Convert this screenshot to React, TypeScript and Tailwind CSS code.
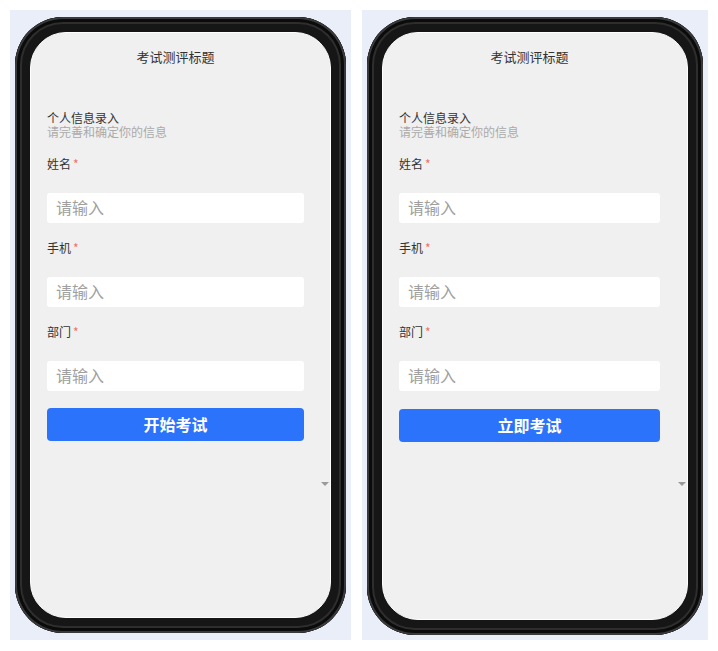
import React from "react";

const font = { fontFamily: '"Noto Sans CJK SC", "Noto Sans", sans-serif' };

function Field({ label }: { label: string }) {
  return (
    <div className="flex flex-col">
      <div className="h-4 text-[12px] leading-4 text-[#333]">
        {label}
        <span className="ml-[2px] text-[#f56c6c]">*</span>
      </div>
      <div className="mt-[21px] h-[30px] rounded-[3px] bg-white pl-[9px] text-[16px] leading-[29px] text-[#a0a0a0]">
        请输入
      </div>
    </div>
  );
}

function Phone({
  button,
  outer,
  pr,
  btnGap,
}: {
  button: string;
  outer: string;
  pr: string;
  btnGap: string;
}) {
  return (
    <div className={`flex flex-col bg-[#e9eef8] ${outer}`}>
      <div className="flex flex-1 flex-col rounded-[48px] bg-[#161616] p-[15px] shadow-[inset_0_0_0_2px_#3a3a3a,inset_0_0_0_5px_#0b0b0b,inset_0_0_0_7px_#2e2e2e]">
        <div
          className={`relative flex flex-1 flex-col rounded-[36px] border border-white bg-[#f0f0f0] pl-[16px] ${pr}`}
        >
          <div className="mt-[14px] h-5 text-center text-[13px] leading-5 text-[#333]">
            考试测评标题
          </div>
          <div className="mt-[44px] text-[12px] leading-[14px] text-[#333]">
            个人信息录入
          </div>
          <div className="text-[12px] leading-[14px] text-[#aaa]">请完善和确定你的信息</div>
          <div className="mt-[17px] flex flex-col gap-[17px]">
            <Field label="姓名" />
            <Field label="手机" />
            <Field label="部门" />
          </div>
          <div
            className={`${btnGap} h-[33px] rounded-[4px] bg-[#2b73fb] text-center text-[16px] font-bold leading-[33px] text-white`}
          >
            {button}
          </div>
          <div className="absolute right-[1px] top-[449px] h-0 w-0 border-x-[4px] border-t-[4px] border-x-transparent border-t-[#9a9a9a]" />
        </div>
      </div>
    </div>
  );
}

export default function App() {
  return (
    <div className="flex h-[651px] w-[718px] gap-[11px] bg-white px-[10px] pb-[11px] pt-[10px]" style={font}>
      <Phone
        button="开始考试"
        outer="w-[341px] px-[5px] py-[7px]"
        pr="pr-[26px]"
        btnGap="mt-[17px]"
      />
      <Phone
        button="立即考试"
        outer="w-[346px] px-[5px] pt-[7px] pb-[5px]"
        pr="pr-[27px]"
        btnGap="mt-[18px]"
      />
    </div>
  );
}
